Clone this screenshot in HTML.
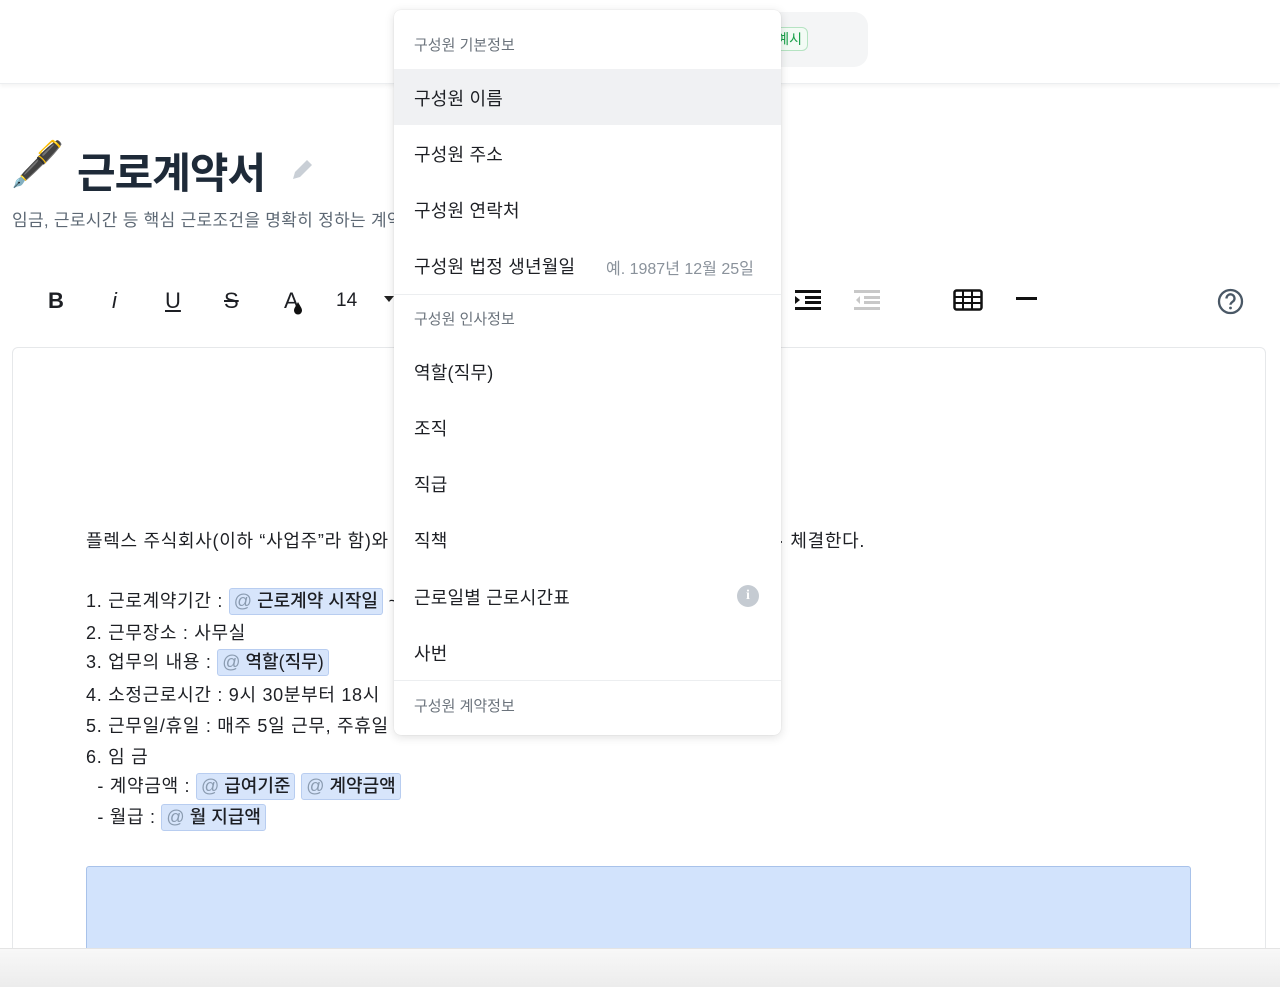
<!DOCTYPE html>
<html><head><meta charset="utf-8"><style>
*{box-sizing:border-box;margin:0;padding:0}
html,body{width:1280px;height:987px;overflow:hidden}
body{background:#fff;font-family:"Liberation Sans","Noto Sans CJK KR",sans-serif;color:#1d1f24;position:relative}
.abs{position:absolute}
.hdr{left:0;top:0;width:1280px;height:84px;background:#fff;box-shadow:0 2px 4px rgba(0,0,0,.05);border-bottom:1px solid #eceef0}
.pill{left:700px;top:12px;width:168px;height:55px;background:#f4f5f6;border-radius:14px}
.tag{left:770px;top:27px;width:38px;height:24px;border:1px solid #b5e3c2;border-radius:6px;color:#1aa14a;font-size:14px;line-height:22px;text-align:right;padding-right:5px;background:#f3fbf5}
.title{left:77px;top:140px;font-size:42px;font-weight:bold;color:#1e2a38;letter-spacing:-1px}
.sub{left:12px;top:206px;font-size:17px;color:#5d6874;letter-spacing:.3px}
.tb{top:288px;font-size:22px;color:#1d1f24}
.editor{left:12px;top:347px;width:1254px;height:640px;border:1px solid #e6e8ea;border-radius:6px}
.t{font-size:18px;letter-spacing:.7px;color:#1d1f24;left:86px;white-space:nowrap}
.chip{display:inline-block;background:#d7e5fb;border:1px solid #b8cdf0;border-radius:3px;padding:0 4px;line-height:25px;font-size:18px;font-weight:500;letter-spacing:0}
.chip span{color:#8a9bb0;font-weight:normal}
.blue{left:86px;top:866px;width:1105px;height:90px;background:#d2e3fc;border:1px solid #a8c2ea;border-radius:3px}
.foot{left:0;top:948px;width:1280px;height:39px;background:linear-gradient(#f8f8f8,#ececec);border-top:1px solid #e4e4e4}
.dd{left:394px;top:10px;width:387px;height:725px;background:#fff;border-radius:7px;box-shadow:0 2px 10px rgba(0,0,0,.13),0 0 1px rgba(0,0,0,.15)}
.h{position:absolute;left:20px;font-size:15px;color:#6b737c}
.it{position:absolute;left:20px;font-size:18px;color:#1d1f24;letter-spacing:.2px}
.sep{position:absolute;left:0;width:387px;height:1px;background:#eceef0}
</style></head><body>
<div class="abs hdr"></div>
<div class="abs pill"></div>
<div class="abs tag">예시</div>

<div class="abs" style="left:10px;top:140px;font-size:44px;line-height:50px">🖋️</div>
<div class="abs title">근로계약서</div>
<svg class="abs" style="left:290px;top:156px" width="26" height="26" viewBox="0 0 26 26"><path d="M3 23l2-7L17 4l5 5L10 21z" fill="#c9cfd6"/></svg>
<div class="abs sub">임금, 근로시간 등 핵심 근로조건을 명확히 정하는 계약</div>

<div class="abs tb" style="left:48px;font-weight:bold;">B</div>
<div class="abs tb" style="left:112px;font-style:italic;">i</div>
<div class="abs tb" style="left:165px;text-decoration:underline;">U</div>
<div class="abs tb" style="left:224px;text-decoration:line-through;">S</div>
<div class="abs tb" style="left:284px;">A</div>
<svg class="abs" style="left:293px;top:302px" width="10" height="13"><path d="M5 0C3 4 1 6 1 8.5a4 4 0 008 0C9 6 7 4 5 0z" fill="#111"/></svg>
<div class="abs" style="left:336px;top:290px;font-size:19px">14</div>
<svg class="abs" style="left:384px;top:296px" width="10" height="6"><path d="M0 0h10L5 6z" fill="#222"/></svg>
<svg class="abs" style="left:795px;top:290px" width="28" height="20"><g fill="#111"><rect x="0" y="0" width="26" height="3"/><rect x="10" y="6" width="16" height="3"/><rect x="10" y="11" width="16" height="3"/><rect x="0" y="17" width="26" height="3"/><path d="M0 6l5 4-5 4z"/></g></svg>
<svg class="abs" style="left:854px;top:290px" width="28" height="20"><g fill="#c8c8c8"><rect x="0" y="0" width="26" height="3"/><rect x="10" y="6" width="16" height="3"/><rect x="10" y="11" width="16" height="3"/><rect x="0" y="17" width="26" height="3"/><path d="M6 6l-4 4 4 4z"/></g></svg>
<svg class="abs" style="left:953px;top:289px" width="30" height="22"><rect x="1.5" y="1.5" width="27" height="19" rx="2" fill="none" stroke="#111" stroke-width="2.5"/><path d="M1 8h28M1 14h28M10 1v20M19 1v20" stroke="#111" stroke-width="2"/></svg>
<div class="abs" style="left:1016px;top:297px;width:21px;height:3px;background:#111"></div>
<svg class="abs" style="left:1217px;top:288px" width="27" height="27"><circle cx="13.5" cy="13.5" r="11.5" fill="none" stroke="#4a5866" stroke-width="2.3"/><path d="M9.5 10.5a4 4 0 117 2.5c-1.5 1.2-3 1.8-3 3.8" fill="none" stroke="#4a5866" stroke-width="2.3"/><circle cx="13.5" cy="20" r="1.4" fill="#4a5866"/></svg>

<div class="abs editor"></div>
<div class="abs t" style="top:527px">플렉스 주식회사(이하 “사업주”라 함)와</div>
<div class="abs t" style="top:527px;left:778px">· 체결한다.</div>
<div class="abs t" style="top:587px">1. 근로계약기간 : <span class="chip"><span>@</span> 근로계약 시작일</span> ~</div>
<div class="abs t" style="top:619px">2. 근무장소 : 사무실</div>
<div class="abs t" style="top:648px">3. 업무의 내용 : <span class="chip"><span>@</span> 역할(직무)</span></div>
<div class="abs t" style="top:681px">4. 소정근로시간 :  9시 30분부터  18시</div>
<div class="abs t" style="top:712px">5. 근무일/휴일 : 매주 5일 근무, 주휴일 매</div>
<div class="abs t" style="top:743px">6. 임 금</div>
<div class="abs t" style="top:772px">&nbsp;&nbsp;- 계약금액 : <span class="chip"><span>@</span> 급여기준</span> <span class="chip"><span>@</span> 계약금액</span></div>
<div class="abs t" style="top:803px">&nbsp;&nbsp;- 월급 : <span class="chip"><span>@</span> 월 지급액</span></div>
<div class="abs blue"></div>
<div class="abs foot"></div>

<div class="abs dd">
<div class="h" style="top:24px">구성원 기본정보</div>
<div style="position:absolute;left:0;top:59px;width:387px;height:56px;background:#f0f1f3"></div>
<div class="it" style="top:75px">구성원 이름</div>
<div class="it" style="top:131px">구성원 주소</div>
<div class="it" style="top:187px">구성원 연락처</div>
<div class="it" style="top:243px">구성원 법정 생년월일</div>
<div style="position:absolute;left:212px;top:245px;font-size:16px;color:#8a929b">예. 1987년 12월 25일</div>
<div class="sep" style="top:284px"></div>
<div class="h" style="top:298px">구성원 인사정보</div>
<div class="it" style="top:349px">역할(직무)</div>
<div class="it" style="top:405px">조직</div>
<div class="it" style="top:461px">직급</div>
<div class="it" style="top:517px">직책</div>
<div class="it" style="top:574px">근로일별 근로시간표</div>
<div style="position:absolute;left:343px;top:575px;width:22px;height:22px;border-radius:50%;background:#c5cbd2;color:#fff;font-size:14px;font-weight:bold;text-align:center;line-height:22px;font-family:'Liberation Serif'">i</div>
<div class="it" style="top:630px">사번</div>
<div class="sep" style="top:670px"></div>
<div class="h" style="top:685px">구성원 계약정보</div>
</div>
</body></html>
